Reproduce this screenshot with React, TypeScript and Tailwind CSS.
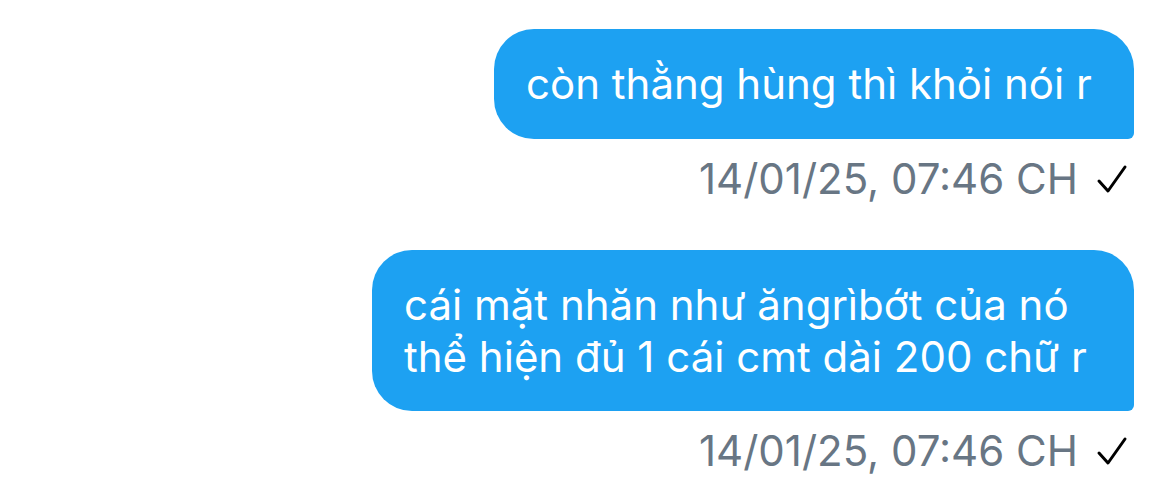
export default function App() {
  return (
    <div className="w-[1170px] h-[499px] bg-white flex flex-col items-end pr-[36px] pt-[29px]" style={{ fontFamily: "Inter, 'Noto Sans', sans-serif" }}>
      <div className="w-[640px] h-[110px] bg-[#1da1f2] rounded-[40px] rounded-br-[6px] flex items-center pl-[32px] text-white text-[42px] leading-[52px]">
        còn thằng hùng thì khỏi nói r
      </div>
      <div className="flex items-center mt-[22px] pr-[6px] h-[34px] text-[#687684] text-[42px]">
        <span>14/01/25, 07:46 CH</span>
        <svg width="32" height="30" viewBox="0 0 32 30" className="ml-[18px] mt-[2px]" fill="none" stroke="#000" strokeWidth="3" strokeLinecap="round" strokeLinejoin="round">
          <path d="M3 17 L12 27 L29 3" />
        </svg>
      </div>
      <div className="mt-[55px] w-[762px] h-[161px] bg-[#1da1f2] rounded-[40px] rounded-br-[6px] flex flex-col justify-center pl-[32px] text-white text-[42px] leading-[52px]">
        <div>cái mặt nhăn như ăngrìbớt của nó</div>
        <div>thể hiện đủ 1 cái cmt dài 200 chữ r</div>
      </div>
      <div className="flex items-center mt-[22px] pr-[6px] h-[34px] text-[#687684] text-[42px]">
        <span>14/01/25, 07:46 CH</span>
        <svg width="32" height="30" viewBox="0 0 32 30" className="ml-[18px] mt-[2px]" fill="none" stroke="#000" strokeWidth="3" strokeLinecap="round" strokeLinejoin="round">
          <path d="M3 17 L12 27 L29 3" />
        </svg>
      </div>
    </div>
  );
}
